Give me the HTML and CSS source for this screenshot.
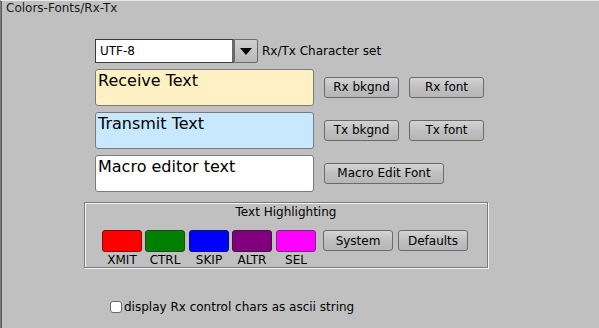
FILE: index.html
```html
<!DOCTYPE html>
<html lang="en">

<head>
    <meta charset="UTF-8">
    <title>Colors-Fonts/Rx-Tx</title>
    <link rel="stylesheet" href="styles.css">
</head>

<body>
    <div class="panel">
        <div class="panel-title">Colors-Fonts/Rx-Tx</div>

        <div class="form">
            <!-- character set -->
            <div class="row charset-row">
                <div class="choice">
                    <div class="choice-value">UTF-8</div>
                    <div class="choice-btn"><span class="arrow"></span></div>
                </div>
                <span class="choice-label">Rx/Tx Character set</span>
            </div>

            <!-- text areas -->
            <div class="row text-row">
                <div class="text-box rx-box">Receive Text</div>
                <button class="btn">Rx bkgnd</button>
                <button class="btn">Rx font</button>
            </div>
            <div class="row text-row">
                <div class="text-box tx-box">Transmit Text</div>
                <button class="btn">Tx bkgnd</button>
                <button class="btn">Tx font</button>
            </div>
            <div class="row text-row">
                <div class="text-box macro-box">Macro editor text</div>
                <button class="btn btn-wide">Macro Edit Font</button>
            </div>
        </div>

        <!-- highlight colours -->
        <div class="highlight">
            <div class="highlight-title">Text Highlighting</div>
            <div class="highlight-row">
                <div class="swatch">
                    <div class="swatch-btn red"></div>
                    <span>XMIT</span>
                </div>
                <div class="swatch">
                    <div class="swatch-btn green"></div>
                    <span>CTRL</span>
                </div>
                <div class="swatch">
                    <div class="swatch-btn blue"></div>
                    <span>SKIP</span>
                </div>
                <div class="swatch">
                    <div class="swatch-btn purple"></div>
                    <span>ALTR</span>
                </div>
                <div class="swatch">
                    <div class="swatch-btn magenta"></div>
                    <span>SEL</span>
                </div>
                <button class="btn btn-small">System</button>
                <button class="btn btn-small">Defaults</button>
            </div>
        </div>

        <label class="check-row">
            <span class="check"></span>display Rx control chars as ascii string
        </label>
    </div>
</body>

</html>
```

FILE: styles.css
```css
body,
html {
    margin: 0;
    padding: 0;
    font-family: 'DejaVu Sans', sans-serif;
    font-size: 12px;
    color: black;
    background: #c0c0c0;
}

.panel {
    width: 599px;
    height: 328px;
    box-sizing: border-box;
    background: #c0c0c0;
    border-top: 1px solid #e8e8e8;
    border-left: 1px solid #7a7a7a;
    box-shadow: inset 1px 0 0 #5a5a5a;
    overflow: hidden;
}

.panel-title {
    padding: 0 0 0 5px;
    line-height: 14px;
    color: #1a1a1a;
}

.form {
    padding-left: 94px;
    margin-top: 24px;
}

.row {
    display: flex;
    align-items: center;
}

.charset-row {
    height: 24px;
}

.choice {
    display: flex;
    height: 24px;
}

.choice-value {
    width: 139px;
    height: 24px;
    box-sizing: border-box;
    background: white;
    border: 1px solid #3a3a3a;
    border-right: 2px solid #6a6a6a;
    padding: 0 4px;
    line-height: 22px;
}

.choice-btn {
    width: 24px;
    height: 24px;
    box-sizing: border-box;
    background: linear-gradient(#d0d0d0, #b8b8b8);
    border: 1px solid #6a6a6a;
    border-radius: 0 2px 2px 0;
    display: flex;
    align-items: center;
    justify-content: center;
}

.arrow {
    width: 0;
    height: 0;
    border-left: 6px solid transparent;
    border-right: 6px solid transparent;
    border-top: 7px solid black;
}

.choice-label {
    margin-left: 4px;
}

.text-row {
    margin-top: 6px;
    height: 36px;
}

.text-row + .text-row {
    margin-top: 7px;
}

.text-box {
    width: 219px;
    height: 37px;
    box-sizing: border-box;
    border: 1px solid #7a7a7a;
    border-radius: 3px;
    padding: 1px 2px;
    font-size: 16px;
    line-height: 20px;
    align-self: flex-start;
    margin-right: 10px;
}

.rx-box {
    background: #fff1c4;
}

.tx-box {
    background: #c7e8ff;
}

.macro-box {
    background: white;
}

.btn {
    width: 75px;
    height: 21px;
    box-sizing: border-box;
    font-family: 'DejaVu Sans', sans-serif;
    font-size: 12px;
    color: black;
    background: linear-gradient(#d4d4d4, #c0c0c0 50%, #b6b6b6);
    border: 1px solid #6a6a6a;
    border-radius: 3px;
    padding: 0;
    margin-right: 10px;
}

.btn-wide {
    width: 120px;
}

.highlight {
    width: 404px;
    height: 66px;
    box-sizing: border-box;
    margin: 11px 0 0 83px;
    border: 1px solid #7a7a7a;
    box-shadow: 1px 1px 0 #f4f4f4, inset 1px 1px 0 #f4f4f4;
}

.highlight-title {
    text-align: center;
    line-height: 16px;
    margin-top: 1px;
}

.highlight-row {
    display: flex;
    align-items: flex-start;
    padding: 10px 0 0 17px;
}

.swatch {
    display: flex;
    flex-direction: column;
    align-items: center;
    width: 40px;
    margin-right: 3px;
}

.swatch:nth-child(2n) {
    margin-right: 4px;
}

.swatch-btn {
    width: 40px;
    height: 22px;
    box-sizing: border-box;
    border: 1px solid #4a2a2a;
    border-radius: 3px;
}

.swatch span {
    line-height: 16px;
    margin-top: 0;
}

.red {
    background: #ff0000;
    border-color: #8a0000;
}

.green {
    background: #008000;
    border-color: #1c4a1c;
}

.blue {
    background: #0000ff;
    border-color: #10106a;
}

.purple {
    background: #800080;
    border-color: #4a104a;
}

.magenta {
    background: #ff00ff;
    border-color: #8a1a8a;
}

.btn-small {
    width: 70px;
    margin-right: 5px;
}

.highlight-row .swatch + .btn {
    margin-left: 4px;
}

.check-row {
    display: flex;
    align-items: center;
    margin: 32px 0 0 109px;
    line-height: 14px;
}

.check {
    width: 12px;
    height: 12px;
    box-sizing: border-box;
    background: white;
    border: 1px solid #6a6a6a;
    border-radius: 3px;
    margin-right: 2px;
}
```
